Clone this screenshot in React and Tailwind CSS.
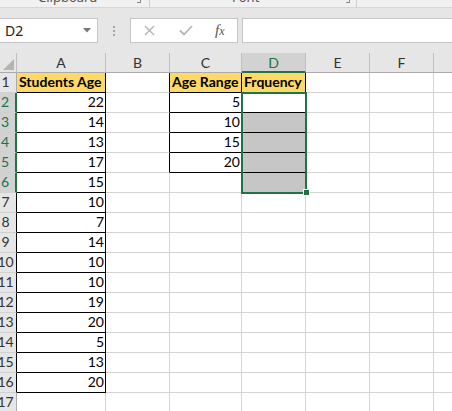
import React from "react";

const ages = [22, 14, 13, 17, 15, 10, 7, 14, 10, 10, 19, 20, 5, 13, 20];
const ranges = [5, 10, 15, 20];

function Cell({ w, bg = "bg-white", r = "border-r-[#d4d4d4]", b = "border-b-[#d4d4d4]", bold = false, left = false, children }) {
  return (
    <div
      className={`${w} ${bg} ${r} ${b} ${bold ? "font-bold" : "font-normal"} ${left ? "justify-start pl-[2px]" : "justify-end pr-[1px]"} h-[20px] shrink-0 border-r border-b flex items-end pb-[1px] text-[14px] leading-[18px] text-black overflow-hidden whitespace-nowrap`}
    >
      {children}
    </div>
  );
}

function RowHead({ n, active, black }) {
  return (
    <div
      className={`${active ? "bg-[#d2d2d2] text-[#217346] border-r-2 border-r-[#217346]" : black ? "bg-[#e6e6e6] text-[#333] border-r border-r-black" : "bg-[#e6e6e6] text-[#333] border-r border-r-[#ababab]"} w-[17px] h-[20px] shrink-0 border-b border-b-[#d0d0d0] flex items-end justify-center pr-[5px] pb-[1px] text-[14px] leading-[18px]`}
    >
      {n}
    </div>
  );
}

function ColHead({ w, label, active }) {
  return (
    <div
      className={`${w} ${active ? "bg-[#d2d2d2] text-[#217346] border-b-2 border-b-[#217346]" : "bg-[#e6e6e6] text-[#333] border-b border-b-[#ababab]"} h-[20px] shrink-0 border-r border-r-[#c0c0c0] flex items-center justify-center text-[14px]`}
    >
      {label}
    </div>
  );
}

function Row({ n }) {
  const inA = n >= 1 && n <= 16;
  const inC = n >= 1 && n <= 5;
  const active = n >= 2 && n <= 6;
  const age = n >= 2 && n <= 16 ? ages[n - 2] : null;
  const range = n >= 2 && n <= 5 ? ranges[n - 2] : null;
  return (
    <div className="flex">
      <RowHead n={n} active={active} black={inA && !active && n !== 1} />
      {n === 1 ? (
        <Cell w="w-[89px]" bg="bg-[#ffd966]" r="border-r-black" b="border-b-black" bold left>
          Students Age
        </Cell>
      ) : (
        <Cell w="w-[89px]" r={inA ? "border-r-black" : "border-r-[#d4d4d4]"} b={inA ? "border-b-black" : "border-b-[#d4d4d4]"}>
          {age}
        </Cell>
      )}
      <Cell w="w-[64px]" r={inC ? "border-r-black" : "border-r-[#d4d4d4]"} />
      {n === 1 ? (
        <Cell w="w-[72px]" bg="bg-[#ffd966]" r="border-r-black" b="border-b-black" bold left>
          Age Range
        </Cell>
      ) : (
        <Cell w="w-[72px]" r={inC ? "border-r-black" : "border-r-[#d4d4d4]"} b={inC ? "border-b-black" : "border-b-[#d4d4d4]"}>
          {range}
        </Cell>
      )}
      {n === 1 ? (
        <Cell w="w-[64px]" bg="bg-[#ffd966]" r="border-r-black" b="border-b-black" bold left>
          Frquency
        </Cell>
      ) : (
        <Cell
          w="w-[64px]"
          bg={n >= 3 && n <= 6 ? "bg-[#c6c6c6]" : "bg-white"}
          r={inC ? "border-r-black" : "border-r-[#d4d4d4]"}
          b={inC ? "border-b-black" : "border-b-[#d4d4d4]"}
        />
      )}
      <Cell w="w-[64px]" />
      <Cell w="w-[64px]" />
      <Cell w="w-[64px]" />
    </div>
  );
}

export default function App() {
  return (
    <div className="w-[452px] h-[411px] overflow-hidden bg-white" style={{ fontFamily: "Lato, 'Noto Sans', sans-serif" }}>
      {/* ribbon group labels, cut at top */}
      <div className="h-[8px] bg-[#f1f1f1] border-b border-b-[#d6d6d6] flex overflow-hidden text-[13px] text-[#555]" style={{ fontFamily: "'Noto Sans', sans-serif" }}>
        <div className="w-[150px] shrink-0 flex border-r border-r-[#d0d0d0]">
          <span className="ml-[38px] -mt-[13px] leading-[20px]">Clipboard</span>
          <span className="ml-auto mr-[8px] w-[4px] h-[3px] border-r border-b border-[#888]"></span>
        </div>
        <div className="w-[207px] shrink-0 flex border-r border-r-[#d0d0d0]">
          <span className="ml-[82px] -mt-[13px] leading-[20px]">Font</span>
          <span className="ml-auto mr-[6px] w-[4px] h-[3px] border-r border-b border-[#888]"></span>
        </div>
      </div>

      {/* formula bar */}
      <div className="h-[45px] bg-[#e6e6e6] pt-[10px] flex items-start" style={{ fontFamily: "'Noto Sans', sans-serif" }}>
        <div className="w-[98px] h-[25px] bg-white border border-l-0 border-[#c6c6c6] flex items-center pl-[5px] text-[14px] text-[#222]">
          D2
          <svg className="ml-auto mr-[6px]" width="8" height="5" viewBox="0 0 8 5">
            <path d="M0 0 H8 L4 4.5 Z" fill="#777" />
          </svg>
        </div>
        <div className="w-[32px] h-[25px] flex flex-col items-center justify-center gap-[2px]">
          <span className="w-[2px] h-[2px] bg-[#a6a6a6]"></span>
          <span className="w-[2px] h-[2px] bg-[#a6a6a6]"></span>
          <span className="w-[2px] h-[2px] bg-[#a6a6a6]"></span>
        </div>
        <div className="w-[108px] h-[25px] bg-white border border-[#c6c6c6] flex items-center">
          <svg className="ml-[13px]" width="11" height="11" viewBox="0 0 11 11">
            <path d="M1 1 L10 10 M10 1 L1 10" stroke="#b5b5b5" strokeWidth="1.4" />
          </svg>
          <svg className="ml-[24px]" width="14" height="11" viewBox="0 0 14 11">
            <path d="M1 5.5 L5 9.5 L13 1" stroke="#b5b5b5" strokeWidth="1.8" fill="none" />
          </svg>
          <span className="ml-[22px] text-[15px] italic text-[#555]" style={{ fontFamily: "'Liberation Serif', serif" }}>
            f<span className="text-[12px]">x</span>
          </span>
        </div>
        <div className="flex-1 ml-[4px] h-[25px] bg-white border border-r-0 border-[#c6c6c6]"></div>
      </div>

      {/* sheet */}
      <div className="relative">
        <div className="flex">
          <div className="w-[17px] h-[20px] shrink-0 bg-[#e6e6e6] border-r border-r-[#c0c0c0] border-b border-b-[#ababab] flex items-end justify-end pr-[2px] pb-[2px]">
            <svg width="11" height="11" viewBox="0 0 11 11">
              <path d="M11 0 V11 H0 Z" fill="#b4b4b4" />
            </svg>
          </div>
          <ColHead w="w-[89px]" label="A" />
          <ColHead w="w-[64px]" label="B" />
          <ColHead w="w-[72px]" label="C" />
          <ColHead w="w-[64px]" label="D" active />
          <ColHead w="w-[64px]" label="E" />
          <ColHead w="w-[64px]" label="F" />
          <ColHead w="w-[64px]" label="" />
        </div>
        {Array.from({ length: 17 }, (_, i) => (
          <Row key={i} n={i + 1} />
        ))}

        {/* selection D2:D6 */}
        <div className="absolute left-[241px] top-[39px] w-[66px] h-[102px] border-2 border-[#217346] pointer-events-none"></div>
        <div className="absolute left-[303px] top-[136px] w-[7px] h-[7px] bg-[#217346] border border-white"></div>
      </div>
    </div>
  );
}
